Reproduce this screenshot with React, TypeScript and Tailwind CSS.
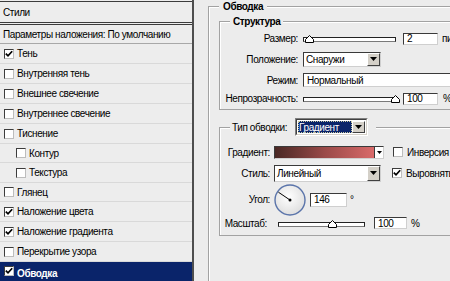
import React from "react";

const Check = ({ on }: { on?: boolean }) => (
  <span className="w-[10px] h-[10px] shrink-0 bg-white border border-t-[#3c3c3c] border-l-[#3c3c3c] border-r-[#bdbdbd] border-b-[#bdbdbd] flex items-center justify-center">
    {on && (
      <svg width="8" height="8" viewBox="0 0 8 8">
        <path d="M0.8 3.6 L3 5.8 L7.2 1.2" stroke="#000" strokeWidth="1.7" fill="none" />
      </svg>
    )}
  </span>
);

const DropBtn = () => (
  <span className="w-[13px] shrink-0 bg-[#d4d0c8] border border-t-white border-l-white border-b-[#404040] border-r-[#404040] flex items-center justify-center">
    <svg width="7" height="4" viewBox="0 0 7 4">
      <path d="M0 0H7L3.5 4Z" fill="#000" />
    </svg>
  </span>
);

const Select = ({ text, className }: { text: string; className: string }) => (
  <div
    className={`flex shrink-0 bg-white border border-t-[#3a3a3a] border-l-[#3a3a3a] border-b-[#cfcfcf] border-r-[#cfcfcf] ${className}`}
  >
    <span className="flex-1 pl-[2px] flex items-center whitespace-nowrap">{text}</span>
    <DropBtn />
  </div>
);

const Field = ({ text, className }: { text: string; className: string }) => (
  <div
    className={`shrink-0 bg-white border border-t-[#3a3a3a] border-l-[#3a3a3a] border-b-[#cfcfcf] border-r-[#cfcfcf] pl-[3px] flex items-center ${className}`}
  >
    {text}
  </div>
);

const Slider = ({ className, thumb }: { className: string; thumb: string }) => (
  <div className={`relative h-[9px] shrink-0 ${className}`}>
    <div className="absolute left-0 right-0 bottom-[1px] h-[5px] border border-[#222] border-b-[#7a7a7a] bg-white" />
    <svg className={`absolute bottom-0 ${thumb}`} width="9" height="8" viewBox="0 0 9 8">
      <path d="M0.5 7.5V4.5L4.5 0.5L8.5 4.5V7.5Z" fill="#fff" stroke="#000" />
    </svg>
  </div>
);

const Label = ({ children, className }: { children: React.ReactNode; className: string }) => (
  <span className={`flex justify-end shrink-0 whitespace-nowrap ${className}`}>{children}</span>
);

const layers: { name: string; on?: boolean; indent?: boolean; h: string }[] = [
  { name: "Тень", on: true, h: "h-[20px]" },
  { name: "Внутренняя тень", h: "h-[20px]" },
  { name: "Внешнее свечение", h: "h-[20px]" },
  { name: "Внутреннее свечение", h: "h-[20px]" },
  { name: "Тиснение", h: "h-[20px]" },
  { name: "Контур", indent: true, h: "h-[19px]" },
  { name: "Текстура", indent: true, h: "h-[20px]" },
  { name: "Глянец", h: "h-[19px]" },
  { name: "Наложение цвета", on: true, h: "h-[20px]" },
  { name: "Наложение градиента", on: true, h: "h-[20px]" },
  { name: "Перекрытие узора", h: "h-[20px]" },
];

export default function App() {
  return (
    <div className="w-[450px] h-[281px] overflow-hidden flex bg-[#ececec] text-black text-[10px] tracking-[-0.4px] font-['Liberation_Sans',Arial,sans-serif]">
      {/* styles list */}
      <div className="w-[194px] shrink-0 flex flex-col pt-[1px] bg-[#ededed] border-r-2 border-r-[#4e4e4e]">
        <div className="h-[22px] flex items-center pl-[3px] border-t border-b border-[#3c3c3c]">Стили</div>
        <div className="mt-[1px] h-[20px] flex items-center pl-[3px] border-t border-t-[#3c3c3c] border-b border-b-[#a8a8a8]">
          Параметры наложения: По умолчанию
        </div>
        {layers.map((l) => (
          <div
            key={l.name}
            className={`${l.h} flex items-center gap-[3px] border-b border-b-[#d9d9d9] ${l.indent ? "pl-[16px]" : "pl-[4px]"}`}
          >
            <Check on={l.on} />
            <span>{l.name}</span>
          </div>
        ))}
        <div className="flex-1 flex items-start pt-[4px] pl-[4px] gap-[3px] bg-[#0a246a] text-white font-bold">
          <Check on />
          <span>Обводка</span>
        </div>
      </div>

      {/* stroke settings */}
      <div className="flex-1 overflow-hidden pl-[14px]">
        <fieldset className="w-[300px] min-h-[300px] border border-[#a2a2a2] shadow-[inset_1px_1px_0_#fff] pl-[10px] pt-[2px]">
          <legend className="px-[4px] font-bold leading-[13px] bg-[#ececec]">Обводка</legend>

          <fieldset className="w-[270px] border border-[#a2a2a2] shadow-[inset_1px_1px_0_#fff] pl-[10px] pt-[1px] pb-[2px]">
            <legend className="px-[3px] font-bold leading-[13px] bg-[#ececec]">Структура</legend>
            <div className="h-[19px] flex items-center">
              <Label className="w-[68px]">Размер:</Label>
              <Slider className="ml-[5px] w-[93px]" thumb="left-[2px]" />
              <Field text="2" className="ml-[7px] w-[35px] h-[12px]" />
              <span className="ml-[4px]">пикс</span>
            </div>
            <div className="h-[22px] flex items-center">
              <Label className="w-[68px]">Положение:</Label>
              <Select text="Снаружи" className="ml-[5px] w-[78px] h-[15px]" />
            </div>
            <div className="h-[20px] flex items-center">
              <Label className="w-[68px]">Режим:</Label>
              <Field text="Нормальный" className="ml-[5px] w-[190px] h-[14px]" />
            </div>
            <div className="h-[17px] flex items-center">
              <Label className="w-[68px]">Непрозрачность:</Label>
              <Slider className="ml-[5px] w-[93px]" thumb="left-[88px]" />
              <Field text="100" className="ml-[7px] w-[35px] h-[12px]" />
              <span className="ml-[5px]">%</span>
            </div>
          </fieldset>

          <fieldset className="mt-[8px] w-[270px] border border-[#a2a2a2] shadow-[inset_1px_1px_0_#fff] pl-[10px] pt-[6px] pb-[4px]">
            <legend className="pl-[2px] pr-[8px] bg-[#ececec] h-[18px] flex items-center">
              <span>Тип обводки:</span>
              <div className="ml-[8px] h-[18px] w-[73px] flex border border-t-[#808080] border-l-[#808080] border-r-white border-b-white">
                <div className="flex-1 flex bg-white border border-t-[#404040] border-l-[#404040] border-r-[#d4d0c8] border-b-[#d4d0c8] p-[1px]">
                  <span className="flex-1 flex items-center pl-[1px] bg-[#0a246a] text-white outline-1 outline-dotted outline-[#c8c8a0] -outline-offset-1">
                    Градиент
                  </span>
                  <DropBtn />
                </div>
              </div>
            </legend>

            <div className="h-[20px] flex items-center">
              <Label className="w-[40px]">Градиент:</Label>
              <div className="ml-[4px] w-[110px] h-[13px] flex border border-[#3a3a3a] border-b-[#cfcfcf] border-r-[#cfcfcf] bg-white">
                <span className="flex-1 bg-gradient-to-r from-[#4a2824] via-[#9a4a48] to-[#d96a6a]" />
                <span className="w-[9px] flex items-center justify-center border-l border-[#3a3a3a]">
                  <svg width="5" height="3" viewBox="0 0 5 3">
                    <path d="M0 0H5L2.5 3Z" fill="#000" />
                  </svg>
                </span>
              </div>
              <span className="ml-[9px]">
                <Check />
              </span>
              <span className="ml-[4px]">Инверсия</span>
            </div>
            <div className="h-[22px] flex items-center">
              <Label className="w-[40px]">Стиль:</Label>
              <Select text="Линейный" className="ml-[4px] w-[107px] h-[17px]" />
              <span className="ml-[11px]">
                <Check on />
              </span>
              <span className="ml-[4px]">Выровнять</span>
            </div>
            <div className="h-[31px] flex items-center">
              <Label className="w-[40px]">Угол:</Label>
              <svg className="ml-[4px] shrink-0" width="32" height="32" viewBox="0 0 32 32">
                <defs>
                  <radialGradient id="dial" cx="0.45" cy="0.4" r="0.65">
                    <stop offset="0" stopColor="#ffffff" />
                    <stop offset="1" stopColor="#dcdcdc" />
                  </radialGradient>
                </defs>
                <circle cx="16" cy="16" r="15" fill="url(#dial)" stroke="#5a74aa" strokeWidth="1.4" />
                <line x1="16" y1="16" x2="4.4" y2="8.2" stroke="#000" strokeWidth="1" />
                <circle cx="16" cy="16" r="1.5" fill="#000" />
              </svg>
              <Field text="146" className="ml-[4px] w-[37px] h-[14px]" />
              <span className="ml-[3px] self-start mt-[8px]">°</span>
            </div>
            <div className="h-[16px] flex items-center">
              <Label className="w-[37px]">Масштаб:</Label>
              <Slider className="ml-[11px] w-[87px]" thumb="left-[50px]" />
              <Field text="100" className="ml-[9px] w-[33px] h-[12px]" />
              <span className="ml-[4px]">%</span>
            </div>
          </fieldset>
        </fieldset>
      </div>
    </div>
  );
}
